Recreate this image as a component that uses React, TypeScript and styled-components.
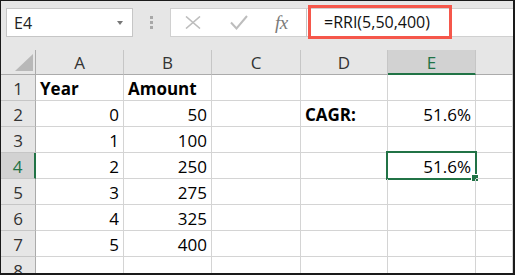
import React from 'react';
import styled, { createGlobalStyle } from 'styled-components';

const GlobalStyle = createGlobalStyle`
  html, body {
    margin: 0;
    padding: 0;
    background: #ffffff;
  }
  * {
    box-sizing: border-box;
  }
`;

const GREEN = '#217346';

type CellData = { text?: string | number; bold?: boolean; align?: 'left' | 'right' };

const columns = ['A', 'B', 'C', 'D', 'E', ''];
const selectedCol = 4;
const selectedRow = 4;

const rows: CellData[][] = [
  [{ text: 'Year', bold: true }, { text: 'Amount', bold: true }, {}, {}, {}, {}],
  [{ text: 0, align: 'right' }, { text: 50, align: 'right' }, {}, { text: 'CAGR:', bold: true }, { text: '51.6%', align: 'right' }, {}],
  [{ text: 1, align: 'right' }, { text: 100, align: 'right' }, {}, {}, {}, {}],
  [{ text: 2, align: 'right' }, { text: 250, align: 'right' }, {}, {}, { text: '51.6%', align: 'right' }, {}],
  [{ text: 3, align: 'right' }, { text: 275, align: 'right' }, {}, {}, {}, {}],
  [{ text: 4, align: 'right' }, { text: 325, align: 'right' }, {}, {}, {}, {}],
  [{ text: 5, align: 'right' }, { text: 400, align: 'right' }, {}, {}, {}, {}],
  [{}, {}, {}, {}, {}, {}],
];

const Frame = styled.div`
  width: 515px;
  height: 275px;
  overflow: hidden;
  background: #e6e6e6;
  border-top: 1px solid #1a1a1a;
  border-left: 1px solid #1a1a1a;
  border-right: 2px solid #1a1a1a;
  border-bottom: 2px solid #1a1a1a;
  display: flex;
  flex-direction: column;
  font-family: 'Open Sans', 'Liberation Sans', sans-serif;
`;

const Toolbar = styled.div`
  height: 49px;
  flex-shrink: 0;
  display: flex;
  align-items: flex-start;
  padding: 7px 0 0 5px;
`;

const NameBox = styled.div`
  width: 127px;
  height: 29px;
  background: #fff;
  border: 1px solid #c6c6c6;
  display: flex;
  align-items: center;
  justify-content: space-between;
  padding: 0 9px 0 7px;
  font-size: 16px;
  color: #222;
`;

const DropArrow = styled.span`
  width: 0;
  height: 0;
  border-left: 3.5px solid transparent;
  border-right: 3.5px solid transparent;
  border-top: 4px solid #777;
`;

const Grip = styled.div`
  width: 37px;
  height: 29px;
  display: flex;
  flex-direction: column;
  align-items: center;
  justify-content: center;
  gap: 2px;
  padding-right: 1px;

  & > span {
    width: 3px;
    height: 3px;
    background: #a8a8a8;
  }
`;

const FormulaBar = styled.div`
  flex: 1;
  height: 29px;
  display: flex;
`;

const CmdBox = styled.div`
  width: 137px;
  height: 100%;
  background: #fff;
  border: 1px solid #d0d0d0;
  border-right: 1px solid #c6c6c6;
  display: flex;
  align-items: center;
  padding-left: 14px;
  gap: 29px;
`;

const Fx = styled.span`
  font-family: 'Liberation Serif', serif;
  font-style: italic;
  font-size: 19px;
  color: #7a7a7a;
  margin-left: -2px;
  letter-spacing: -0.5px;
`;

const Input = styled.div`
  flex: 1;
  height: 100%;
  background: #fff;
  border-top: 1px solid #d0d0d0;
  border-bottom: 1px solid #d0d0d0;
  display: flex;
  align-items: center;
  padding-left: 1px;
`;

const Highlight = styled.div`
  width: 144px;
  height: 34px;
  margin-top: -1px;
  border: 3px solid #f5574b;
  display: flex;
  align-items: center;
  padding-left: 13px;
  font-size: 16px;
  color: #111;
  white-space: nowrap;
`;

const Grid = styled.div`
  flex: 1;
  display: grid;
  grid-template-columns: 35px 88px 88px 89px 87px 88px 1fr;
  grid-template-rows: 25px repeat(7, 26px) 1fr;
  background: #fff;
  font-size: 17px;
`;

const Corner = styled.div`
  background: #e6e6e6;
  border-right: 1px solid #ababab;
  border-bottom: 1px solid #ababab;
  display: flex;
  align-items: flex-end;
  justify-content: flex-end;
  padding: 0 2px 3px 0;
`;

const ColHead = styled.div<{ $active?: boolean }>`
  background: ${(p) => (p.$active ? '#d2d2d2' : '#e6e6e6')};
  border-right: 1px solid #c6c6c6;
  border-bottom: ${(p) => (p.$active ? `2px solid ${GREEN}` : '1px solid #ababab')};
  color: ${(p) => (p.$active ? GREEN : '#333')};
  display: flex;
  align-items: center;
  justify-content: center;
  padding-top: 1px;
`;

const RowHead = styled.div<{ $active?: boolean }>`
  background: ${(p) => (p.$active ? '#d2d2d2' : '#e6e6e6')};
  border-right: ${(p) => (p.$active ? `2px solid ${GREEN}` : '1px solid #ababab')};
  border-bottom: 1px solid #c6c6c6;
  color: ${(p) => (p.$active ? GREEN : '#333')};
  display: flex;
  align-items: center;
  justify-content: center;
  padding-top: 2px;
`;

const Cell = styled.div<{ $align?: 'left' | 'right'; $bold?: boolean }>`
  position: relative;
  border-right: 1px solid #d4d4d4;
  border-bottom: 1px solid #d4d4d4;
  display: flex;
  align-items: center;
  justify-content: ${(p) => (p.$align === 'right' ? 'flex-end' : 'flex-start')};
  padding: 2px 4px 0 4px;
  font-weight: ${(p) => (p.$bold ? 700 : 400)};
  color: #000;
  white-space: nowrap;
`;

const Selection = styled.div`
  position: absolute;
  left: -2px;
  top: -2px;
  right: -2px;
  bottom: -2px;
  border: 2px solid ${GREEN};
  pointer-events: none;

  &::after {
    content: '';
    position: absolute;
    right: -4px;
    bottom: -4px;
    width: 6px;
    height: 6px;
    background: ${GREEN};
    border: 1px solid #fff;
  }
`;

const CancelIcon = () => (
  <svg width="16" height="13" viewBox="0 0 16 13">
    <path d="M1 0.5 L15 12.5 M15 0.5 L1 12.5" stroke="#bdbdbd" strokeWidth="1.6" fill="none" />
  </svg>
);

const EnterIcon = () => (
  <svg width="18" height="15" viewBox="0 0 18 15">
    <path d="M1 7.5 L6.5 13.5 L17 1" stroke="#bdbdbd" strokeWidth="2" fill="none" />
  </svg>
);

const App = () => {
  return (
    <>
      <GlobalStyle />
      <Frame>
        <Toolbar>
          <NameBox>
            <span>E4</span>
            <DropArrow />
          </NameBox>
          <Grip>
            <span />
            <span />
            <span />
          </Grip>
          <FormulaBar>
            <CmdBox>
              <CancelIcon />
              <EnterIcon />
              <Fx>fx</Fx>
            </CmdBox>
            <Input>
              <Highlight>=RRI(5,50,400)</Highlight>
            </Input>
          </FormulaBar>
        </Toolbar>

        <Grid>
          <Corner>
            <svg width="18" height="17" viewBox="0 0 18 17">
              <polygon points="18,0 18,17 0,17" fill="#b8b8b8" />
            </svg>
          </Corner>
          {columns.map((c, i) => (
            <ColHead key={i} $active={i === selectedCol}>
              {c}
            </ColHead>
          ))}
          {rows.map((row, r) => (
            <React.Fragment key={r}>
              <RowHead $active={r + 1 === selectedRow}>{r + 1}</RowHead>
              {row.map((cell, c) => (
                <Cell key={c} $align={cell.align} $bold={cell.bold}>
                  {cell.text}
                  {r + 1 === selectedRow && c === selectedCol && <Selection />}
                </Cell>
              ))}
            </React.Fragment>
          ))}
        </Grid>
      </Frame>
    </>
  );
};

export default App;
